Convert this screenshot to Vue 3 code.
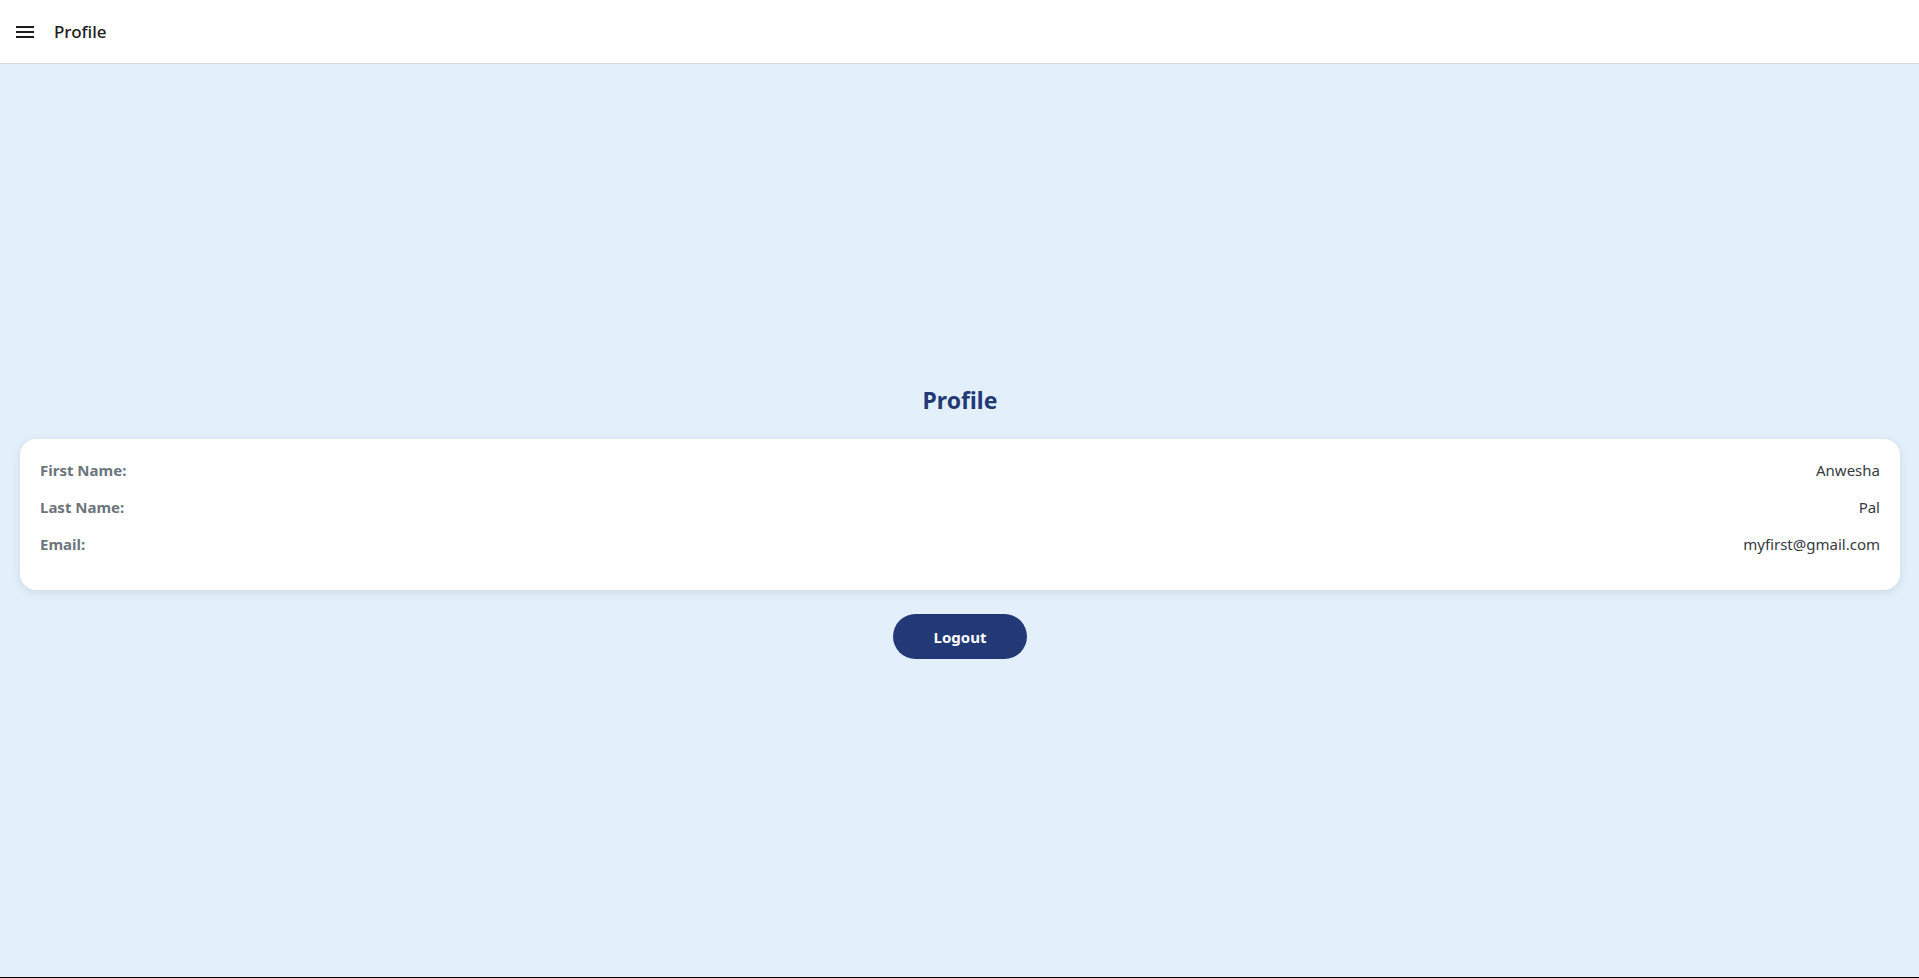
<script setup>
const fields = [
  { label: 'First Name:', value: 'Anwesha' },
  { label: 'Last Name:', value: 'Pal' },
  { label: 'Email:', value: 'myfirst@gmail.com' },
]
</script>

<template>
  <div class="screen">
    <header class="bar">
      <button class="menu" type="button" aria-label="Open menu">
        <svg width="24" height="24" viewBox="0 0 24 24" fill="#1c1c1e" aria-hidden="true">
          <path d="M3 6h18v2H3zM3 11h18v2H3zM3 16h18v2H3z" />
        </svg>
      </button>
      <span class="bar-title">Profile</span>
    </header>
    <main class="content">
      <h1 class="title">Profile</h1>
      <dl class="card">
        <div v-for="field in fields" :key="field.label" class="row">
          <dt>{{ field.label }}</dt>
          <dd>{{ field.value }}</dd>
        </div>
      </dl>
      <button class="logout" type="button">Logout</button>
    </main>
  </div>
</template>

<style>
body {
  margin: 0;
}
</style>

<style scoped>
.screen {
  display: flex;
  flex-direction: column;
  box-sizing: border-box;
  min-height: 100vh;
  border-bottom: 1px solid #000;
  background: #e3f0fc;
  font-family: "Segoe UI", "Noto Sans", sans-serif;
}
.bar {
  display: flex;
  align-items: center;
  gap: 17px;
  padding: 20px 13px 19px;
  border-bottom: 1px solid #d8d8d8;
  background: #fff;
}
.menu {
  display: flex;
  padding: 0;
  border: 0;
  background: none;
  cursor: pointer;
}
.bar-title {
  color: #1c1c1e;
  font-size: 17px;
  font-weight: 500;
  line-height: 24px;
}
.content {
  display: flex;
  flex: 1;
  flex-direction: column;
  align-items: center;
  justify-content: center;
  padding: 0 19px 0 20px;
}
.title {
  margin: 0 0 20px;
  color: #233975;
  font-size: 23px;
  font-weight: 700;
  line-height: 37px;
}
.card {
  box-sizing: border-box;
  width: 100%;
  margin: 0 0 24px;
  padding: 20px;
  border-radius: 16px;
  background: #fff;
  box-shadow: 0 2px 10px rgba(0, 0, 0, 0.1);
}
.row {
  display: flex;
  justify-content: space-between;
  margin-bottom: 15px;
  font-size: 15px;
  line-height: 22px;
}
dt {
  color: #6c757d;
  font-weight: 700;
}
dd {
  margin: 0;
  color: #343a40;
}
.logout {
  min-width: 134px;
  padding: 13px 40px 11px;
  border: 0;
  border-radius: 25px;
  background: #233975;
  color: #fff;
  font: inherit;
  font-size: 15px;
  font-weight: 700;
  line-height: 21px;
  cursor: pointer;
}
</style>
